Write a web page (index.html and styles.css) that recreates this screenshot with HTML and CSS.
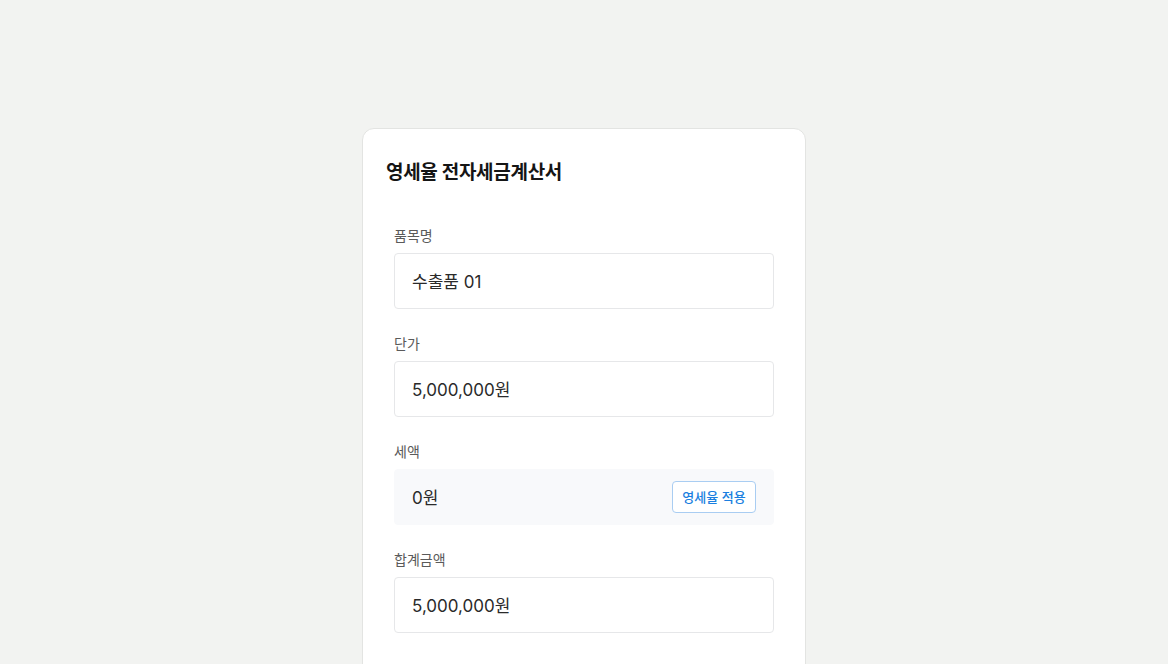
FILE: index.html
```html
<!DOCTYPE html>
<html lang="ko">
<head>
<meta charset="utf-8">
<title>영세율 전자세금계산서</title>
<link rel="stylesheet" href="styles.css">
</head>
<body>
<main class="page">
  <section class="card">
    <h1 class="title">영세율 전자세금계산서</h1>
    <div class="form">
      <div class="field">
        <label class="label">품목명</label>
        <div class="input">수출품 01</div>
      </div>
      <div class="field">
        <label class="label">단가</label>
        <div class="input">5,000,000원</div>
      </div>
      <div class="field">
        <label class="label">세액</label>
        <div class="input input-muted">
          <span>0원</span>
          <button class="btn" type="button">영세율 적용</button>
        </div>
      </div>
      <div class="field">
        <label class="label">합계금액</label>
        <div class="input">5,000,000원</div>
      </div>
    </div>
  </section>
</main>
</body>
</html>
```

FILE: styles.css
```css
* { box-sizing: border-box; }
html, body { margin: 0; height: 100%; }
body {
  background: #f2f3f1;
  font-family: Inter, "Noto Sans CJK KR", sans-serif;
  color: #1f1f1f;
  overflow: hidden;
}
.page {
  display: flex;
  justify-content: center;
  padding-top: 128px;
}
.card {
  width: 444px;
  min-height: 620px;
  background: #ffffff;
  border: 1px solid #e3e4e2;
  border-radius: 12px;
  padding: 30px 23px 32px;
}
.title {
  margin: 0;
  font-size: 19px;
  line-height: 28px;
  font-weight: 700;
  color: #151515;
  letter-spacing: -0.3px;
}
.form {
  display: flex;
  flex-direction: column;
  gap: 24px;
  padding: 38px 8px 0;
}
.field {
  display: flex;
  flex-direction: column;
  gap: 6px;
}
.label {
  font-size: 14px;
  line-height: 22px;
  color: #5a5a5a;
}
.input {
  height: 56px;
  border: 1px solid #e6e7e9;
  border-radius: 4px;
  padding: 0 17px 2px;
  display: flex;
  align-items: center;
  justify-content: space-between;
  font-size: 17px;
  color: #2a2a2a;
  background: #fff;
}
.input-muted {
  background: #f8f9fb;
  border-color: #f8f9fb;
  padding-bottom: 0;
}
.input-muted span {
  padding-bottom: 2px;
}
.btn {
  height: 32px;
  width: 84px;
  padding: 0 0 1px;
  border: 1px solid #a9cdf2;
  border-radius: 4px;
  background: #ffffff;
  color: #1a7fe0;
  font-family: inherit;
  font-size: 13px;
  font-weight: 500;
  cursor: pointer;
}
```
